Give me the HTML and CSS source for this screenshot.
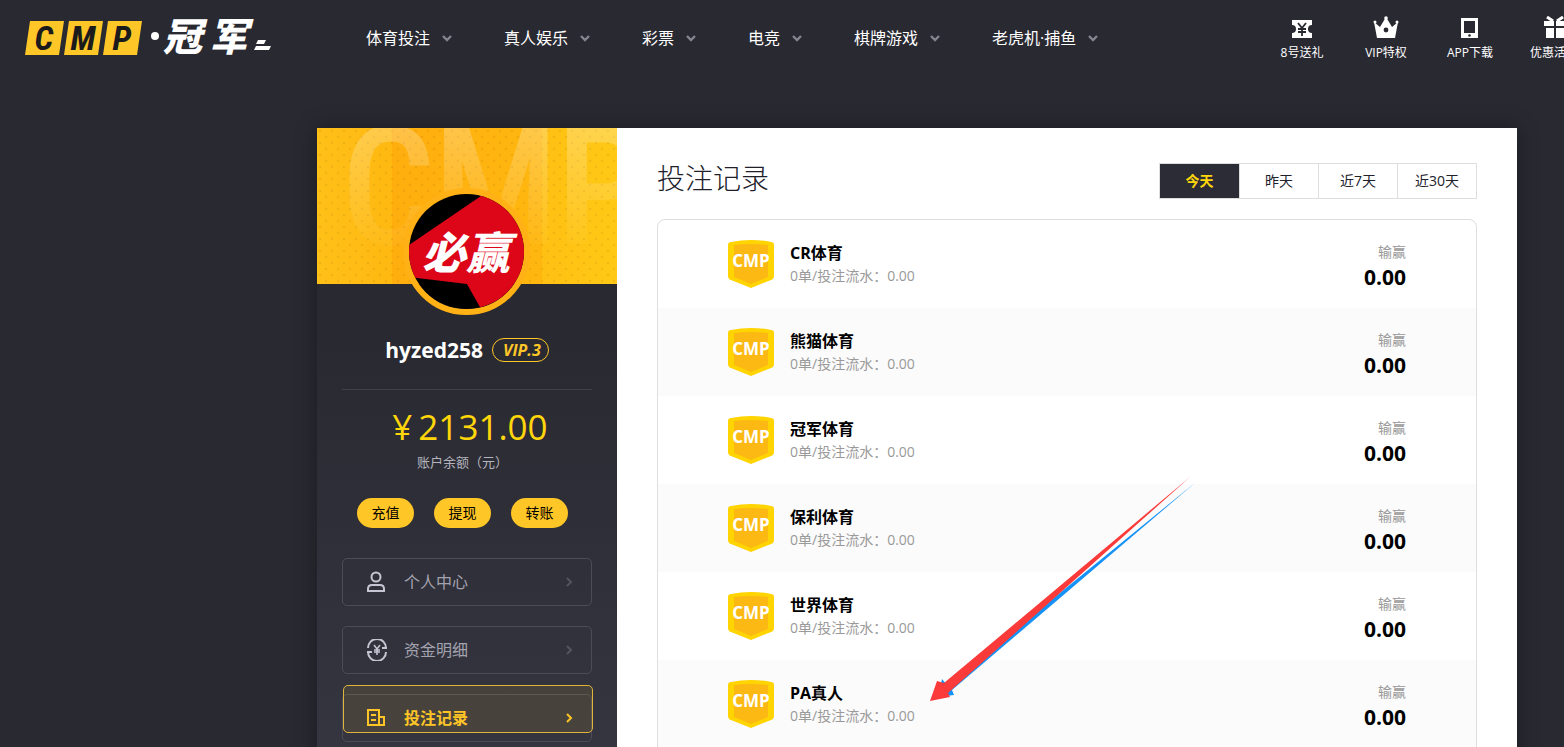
FILE: index.html
```html
<!DOCTYPE html>
<html lang="zh-CN">
<head>
    <meta charset="UTF-8">
    <meta name="viewport" content="width=device-width, initial-scale=1.0">
    <title>投注记录</title>
    <link rel="stylesheet" href="styles.css">
</head>
<body>
    <svg class="symbols" aria-hidden="true">
        <symbol id="down" viewBox="0 0 10 8"><path d="M1 2l4 4 4-4" fill="none" stroke="currentColor" stroke-width="2.4"/></symbol>
        <symbol id="right" viewBox="0 0 8 10"><path d="M2 1l4 4-4 4" fill="none" stroke="currentColor" stroke-width="2"/></symbol>
        <symbol id="shield" viewBox="0 0 46 48">
            <path d="M3 2Q23-2 43 2q3 0 3 3v31q0 3-3 4L23 48 3 40q-3-1-3-4V5q0-3 3-3z" fill="#ffd400"/>
            <path d="M6 5q17-2 34 0v32l-17 7L6 37z" fill="#fdb913"/>
        </symbol>
    </svg>
    <header class="header">
        <a class="logo" href="#" aria-label="CMP 冠军">
            <svg width="248" height="40" viewBox="0 0 248 40">
                <path d="M5 3h34l-5 34H0zM44 3h34l-5 34H39zM83 3h34l-5 34H78z" fill="#ffc627"/>
                <g class="logo-letters"><text x="19" y="32">C</text><text x="58" y="32">M</text><text x="97" y="32">P</text></g>
                <circle cx="130" cy="18" r="4" fill="#fff"/>
                <g class="logo-name"><text x="138" y="33">冠</text><text x="184" y="33">军</text></g>
                <path d="M233 22h8l-2 4h-8zM231 28h15l-2 4h-15z" fill="#fff"/>
            </svg>
        </a>
        <nav class="nav">
            <a href="#">体育投注<svg><use href="#down"/></svg></a>
            <a href="#">真人娱乐<svg><use href="#down"/></svg></a>
            <a href="#">彩票<svg><use href="#down"/></svg></a>
            <a href="#">电竞<svg><use href="#down"/></svg></a>
            <a href="#">棋牌游戏<svg><use href="#down"/></svg></a>
            <a href="#">老虎机·捕鱼<svg><use href="#down"/></svg></a>
        </nav>
        <div class="quick">
            <a href="#">
                <svg viewBox="0 0 26 26"><path d="M3 4h20v5a2 2 0 0 0 0 8v5H3v-5a2 2 0 0 0 0-8z" fill="#fff"/><path d="M9 7l4 5 4-5M13 12v8M9 13h8M9 16h8" fill="none" stroke="#292932" stroke-width="1.8"/></svg>
                8号送礼
            </a>
            <a href="#">
                <svg viewBox="0 0 26 26"><path d="M1 6l6 5 6-10 6 10 6-5-3 16H4z" fill="#fff"/><g fill="#fff"><circle cx="2" cy="6" r="1.500"/><circle cx="13" cy="2" r="1.800"/><circle cx="24" cy="6" r="1.500"/></g><circle cx="13" cy="14" r="2.400" fill="#292932"/></svg>
                VIP特权
            </a>
            <a href="#">
                <svg viewBox="0 0 26 26"><path d="M4 2h17v20H4z" fill="#fff"/><path d="M7 5h11v12H7z" fill="#292932"/><circle cx="12.500" cy="19.500" r="1.300" fill="#292932"/></svg>
                APP下载
            </a>
            <a href="#">
                <svg viewBox="0 0 26 26"><path d="M3 5h10v5H3zM15 5h9v5h-9zM5 12h8v10H5zM15 12h8v10h-8z" fill="#fff"/><path d="M6 1l6 4M22 1l-6 4" stroke="#fff" stroke-width="3"/></svg>
                优惠活动
            </a>
        </div>
    </header>

    <div class="container">
        <aside class="sidebar">
            <div class="banner">
                <svg class="banner-art" viewBox="0 0 300 156" preserveAspectRatio="xMidYMid slice" aria-hidden="true">
                    <defs>
                        <linearGradient id="base"><stop offset="0" stop-color="#ffc018"/><stop offset=".25" stop-color="#ffb911"/><stop offset=".25" stop-color="#ffae0e"/><stop offset=".75" stop-color="#ffb70f"/><stop offset=".75" stop-color="#ffc013"/><stop offset="1" stop-color="#ffc915"/></linearGradient>
                        <linearGradient id="fade" gradientUnits="userSpaceOnUse" x1="0" y1="0" x2="0" y2="120"><stop offset="0" stop-color="#fff" stop-opacity=".24"/><stop offset="1" stop-color="#fff" stop-opacity="0.02"/></linearGradient>
                        <pattern id="dots" width="12" height="12" patternUnits="userSpaceOnUse"><circle cx="3" cy="3" r="1.300"/><circle cx="9" cy="9" r="1.300"/></pattern>
                    </defs>
                    <rect width="300" height="156" fill="url(#base)"/>
                    <rect class="dots" width="300" height="156" fill="url(#dots)"/>
                    <g class="banner-letters"><text x="24" y="116">C</text><text x="116" y="116">M</text><text x="239" y="116">P</text></g>
                </svg>
                <svg class="avatar" viewBox="0 0 115 115" role="img" aria-label="必赢">
                    <path d="M0 0h115v115H0z"/>
                    <path d="M0 51L72 2l43-8v121H72L58 90 0 83z" fill="#dc0618"/>
                    <text x="57" y="75">必赢</text>
                </svg>
            </div>
            <div class="user">
                <span class="user-name">hyzed258</span>
                <span class="vip">VIP.3</span>
            </div>
            <div class="balance">
                <div class="amount"><span>¥</span>2131.00</div>
                <div class="amount-label">账户余额（元）</div>
                <div class="money-btns">
                    <button>充值</button>
                    <button>提现</button>
                    <button>转账</button>
                </div>
            </div>
            <nav class="menu">
                <a href="#">
                    <svg class="icon" viewBox="0 0 22 22"><circle cx="10" cy="6" r="4.500"/><path d="M2 20v-2q0-4 4-4h8q4 0 4 4v2z"/></svg>
                    个人中心
                    <svg class="arrow"><use href="#right"/></svg>
                </a>
                <a href="#">
                    <svg class="icon" viewBox="0 0 22 22"><path d="M2 9a9 9 0 0 1 18 0M20 13a9 9 0 0 1-18 0M1 13h5M16 9h5"/><path class="thin" d="M8 6l3 4 3-4M11 10v6M8 11h6M8 13h6"/></svg>
                    资金明细
                    <svg class="arrow"><use href="#right"/></svg>
                </a>
                <a class="active" href="#">
                    <svg class="icon" viewBox="0 0 22 22"><path d="M2 3h11v15H2zM13 10h5v8h-5M5 8h5M5 13h5"/></svg>
                    投注记录
                    <svg class="arrow"><use href="#right"/></svg>
                </a>
            </nav>
        </aside>

        <main class="content">
            <div class="title-row">
                <h1>投注记录</h1>
                <div class="tabs">
                    <button class="active">今天</button>
                    <button>昨天</button>
                    <button>近7天</button>
                    <button>近30天</button>
                </div>
            </div>
            <ul class="records">
                <li>
                    <div class="badge"><svg><use href="#shield"/></svg><span>CMP</span></div>
                    <div class="info"><h2>CR体育</h2><p>0单/投注流水：0.00</p></div>
                    <div class="result"><p>输赢</p><strong>0.00</strong></div>
                </li>
                <li>
                    <div class="badge"><svg><use href="#shield"/></svg><span>CMP</span></div>
                    <div class="info"><h2>熊猫体育</h2><p>0单/投注流水：0.00</p></div>
                    <div class="result"><p>输赢</p><strong>0.00</strong></div>
                </li>
                <li>
                    <div class="badge"><svg><use href="#shield"/></svg><span>CMP</span></div>
                    <div class="info"><h2>冠军体育</h2><p>0单/投注流水：0.00</p></div>
                    <div class="result"><p>输赢</p><strong>0.00</strong></div>
                </li>
                <li>
                    <div class="badge"><svg><use href="#shield"/></svg><span>CMP</span></div>
                    <div class="info"><h2>保利体育</h2><p>0单/投注流水：0.00</p></div>
                    <div class="result"><p>输赢</p><strong>0.00</strong></div>
                </li>
                <li>
                    <div class="badge"><svg><use href="#shield"/></svg><span>CMP</span></div>
                    <div class="info"><h2>世界体育</h2><p>0单/投注流水：0.00</p></div>
                    <div class="result"><p>输赢</p><strong>0.00</strong></div>
                </li>
                <li>
                    <div class="badge"><svg><use href="#shield"/></svg><span>CMP</span></div>
                    <div class="info"><h2>PA真人</h2><p>0单/投注流水：0.00</p></div>
                    <div class="result"><p>输赢</p><strong>0.00</strong></div>
                </li>
            </ul>
            <svg class="pointer" viewBox="0 0 270 226" aria-hidden="true">
                <path d="M266 6L17 209l-5-6-4 18 16-2-2-5z" fill="#1492f5"/>
                <path d="M260 1L14 207l-7-2-7 20 20-4-2-4z" fill="#fb3a3a"/>
            </svg>
        </main>
    </div>
</body>
</html>
```
FILE: styles.css
```css
* { box-sizing: border-box; }
body { margin: 0; height: 100vh; overflow: hidden; background-color: #292932; color: #000; font-family: "Open Sans", "Noto Sans CJK SC", sans-serif; font-size: 14px; line-height: 20px; }
a { color: inherit; text-decoration: none; }
h1, h2, p, ul { margin: 0; padding: 0; }
button { border: none; font: inherit; cursor: pointer; }
.symbols { position: absolute; width: 0; height: 0; }

.header { display: flex; align-items: center; height: 76px; padding-left: 25px; overflow: hidden; color: #fff; white-space: nowrap; }
.logo { flex: none; width: 341px; height: 40px; }
.logo svg { overflow: visible; }
.logo-letters { fill: #1b1b1b; font-family: "Liberation Sans Narrow", "Roboto Condensed", "DejaVu Sans Condensed", sans-serif; font-size: 34px; font-weight: 700; font-style: italic; text-anchor: middle; }
.logo-name { fill: #fff; font-family: "Noto Sans CJK SC", sans-serif; font-size: 39px; font-weight: 900; font-style: italic; }
.nav { display: flex; gap: 52px; font-size: 16px; }
.nav a { display: flex; align-items: center; gap: 12px; }
.nav svg { width: 10px; height: 8px; color: #858590; }
.quick { display: flex; margin-left: auto; margin-right: -32px; font-size: 12px; line-height: 18px; }
.quick a { display: flex; flex-direction: column; align-items: center; gap: 2px; width: 84px; padding-top: 2px; }
.quick svg { width: 26px; height: 26px; }

.container { display: flex; margin: 52px 47px 0 317px; min-height: 640px; background-color: #fff; box-shadow: 0 0 20px rgba(0,0,0,0.35); }
.sidebar { flex: none; width: 300px; background: linear-gradient(#292931 30%, #373743); }
.banner { position: relative; height: 156px; }
.banner-art { display: block; width: 100%; height: 100%; }
.banner-letters { fill: url(#fade); font-family: "Liberation Sans Narrow", "Roboto Condensed", "DejaVu Sans Condensed", sans-serif; font-size: 166px; font-weight: 500; }
.dots { opacity: 0.06; }
.avatar { position: absolute; left: 86px; top: 60px; width: 127px; height: 127px; border: 6px solid #ffb115; border-radius: 50%; }
.avatar text { fill: #fff; font-family: "Noto Sans CJK SC", sans-serif; font-size: 44px; font-weight: 900; font-style: italic; text-anchor: middle; }
.user { display: flex; align-items: center; justify-content: center; gap: 9px; height: 106px; margin: 0 25px; padding-top: 27px; border-bottom: 1px solid #41414a; color: #fff; }
.user-name { font-size: 21px; font-weight: 700; }
.vip { height: 24px; padding: 0 7px 0 10px; border: 1px solid #ffc627; border-radius: 12px; color: #ffc627; font-size: 16px; line-height: 22px; font-weight: 700; font-style: italic; }
.balance { padding: 17px 40px 30px; }
.amount { padding-left: 6px; color: #ffd60a; font-size: 35px; line-height: 40px; text-align: center; white-space: nowrap; }
.amount span { margin-right: 6px; }
.amount-label { margin: 5px 9px 26px 0; color: #b5b5bf; font-size: 13px; text-align: center; }
.money-btns { display: flex; gap: 20px; }
.money-btns button { width: 57px; height: 30px; padding: 0; border-radius: 15px; background-color: #ffc627; }
.menu { display: flex; flex-direction: column; gap: 20px; padding: 0 25px 20px; color: #a3a3af; font-size: 16px; }
.menu a { position: relative; display: flex; align-items: center; height: 48px; padding: 0 18px 0 23px; border: 1px solid #4c4c56; border-radius: 5px; }
.icon { width: 22px; height: 22px; margin-right: 16px; fill: none; stroke: #c5c5d3; stroke-width: 2; }
.icon .thin { stroke-width: 1.5; }
.arrow { width: 8px; height: 10px; margin-left: auto; color: #54545f; }
.menu .active { color: #ffc627; font-weight: 700; }
.menu .active::after { content: ""; position: absolute; inset: -10px -2px 8px 0; border: 1px solid #e0b33a; border-radius: 5px; background-color: rgba(255,198,39,0.1); }
.active .icon { stroke: #ffc627; }
.active .arrow { color: #ffc627; }

.content { position: relative; flex: 1; padding: 35px 40px 40px; }
.title-row { display: flex; align-items: flex-start; justify-content: space-between; margin-bottom: 20px; }
h1 { color: #20202a; font-size: 28px; line-height: 30px; font-weight: 300; }
.tabs { display: flex; border: 1px solid #dedede; }
.tabs button { width: 79px; height: 34px; padding: 0; background-color: #fff; color: #20202a; }
.tabs button + button { border-left: 1px solid #dedede; }
.tabs .active { background-color: #2c2c37; color: #ffd60a; font-weight: 700; }
.records { padding-bottom: 20px; border: 1px solid #dedede; border-radius: 8px; list-style-type: none; overflow: hidden; }
.records li { display: flex; align-items: flex-start; height: 88px; padding: 20px 70px; }
.records li:nth-child(even) { background-color: #fbfbfb; }
.badge { display: grid; place-items: center; width: 46px; height: 48px; margin-right: 16px; }
.badge svg, .badge span { grid-area: 1 / 1; }
.badge svg { width: 46px; height: 48px; }
.badge span { padding-bottom: 6px; color: #fff; font-size: 17px; font-weight: 700; }
.info { padding-top: 2px; }
.info h2 { font-size: 16px; line-height: 22px; font-weight: 700; }
.info p { padding-top: 2px; }
.info p, .result p { color: #999; }
.result { margin-left: auto; padding-top: 2px; text-align: right; }
.result strong { display: block; font-size: 21px; line-height: 30px; }
.pointer { position: absolute; left: 313px; top: 348px; width: 270px; height: 226px; }
```
